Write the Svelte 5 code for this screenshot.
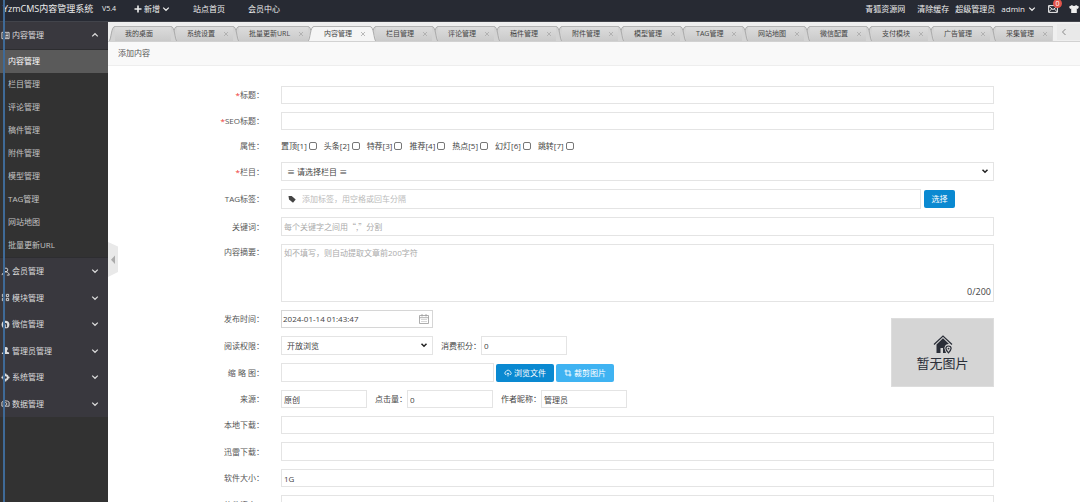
<script>
	let openGroup = $state(0);
	let activeItem = $state("内容管理");
	let activeTab = $state("内容管理");
	let collapsed = $state(false);
	let summary = $state("");

	let tabs = $state([
		"我的桌面", "系统设置", "批量更新URL", "内容管理", "栏目管理", "评论管理", "稿件管理", "附件管理",
		"模型管理", "TAG管理", "网站地图", "微信配置", "支付模块", "广告管理", "采集管理"
	]);

	const contentItems = [
		"内容管理", "栏目管理", "评论管理", "稿件管理", "附件管理", "模型管理", "TAG管理", "网站地图", "批量更新URL"
	];

	const groups = [
		{ name: "会员管理", icon: "user" },
		{ name: "模块管理", icon: "blocks" },
		{ name: "微信管理", icon: "wechat" },
		{ name: "管理员管理", icon: "admin" },
		{ name: "系统管理", icon: "gear" },
		{ name: "数据管理", icon: "data" }
	];

	const flags = ["置顶", "头条", "特荐", "推荐", "热点", "幻灯", "跳转"];

	function closeTab(name) {
		tabs = tabs.filter((t) => t !== name);
	}
</script>

{#snippet chevron(up)}
	<svg class="chevron" class:up viewBox="0 0 8 8" aria-hidden="true">
		<path d="M1.2 2.6 L4 5.3 L6.8 2.6" fill="none" stroke="currentColor" stroke-width="1.2" />
	</svg>
{/snippet}

{#snippet groupIcon(name)}
	<svg class="group-icon" viewBox="0 0 10 10" aria-hidden="true">
		{#if name === "news"}
			<path d="M1 1.5h8v7H1z M5 3.3h3 M5 5h3 M2.3 6.8h5.7" fill="none" stroke="currentColor" />
			<path d="M2.2 2.8h2v2.5h-2z" fill="currentColor" />
		{:else if name === "user"}
			<circle cx="5.5" cy="3.2" r="2" fill="none" stroke="currentColor" />
			<path d="M1.2 9c.3-2.5 2-3.4 4.3-3.6C7.7 5.7 9 7 9.2 9H6.5" fill="none" stroke="currentColor" />
		{:else if name === "blocks"}
			<path d="M1.5 1.5h2.5v2.5h-2.5z M6 1.5h2.5v2.5H6z M1.5 6h2.5v2.5h-2.5z M6 6h2.5v2.5H6z" fill="none" stroke="currentColor" />
		{:else if name === "wechat"}
			<circle cx="5" cy="5" r="4.3" fill="currentColor" />
			<path d="M3 3.5l3 1v3.5" fill="none" stroke="#39383e" stroke-width="1.5" />
		{:else if name === "admin"}
			<path d="M5.5 1a2.2 2.2 0 0 1 1.2 4v1.3L9 7.3V9H1V7.5l3.2-1.2V5A2.2 2.2 0 0 1 5.5 1z" fill="currentColor" />
		{:else if name === "gear"}
			<circle cx="5" cy="5" r="2.5" fill="none" stroke="currentColor" stroke-width="2" />
			<path d="M5 .5v2 M5 7.5v2 M.5 5h2 M7.5 5h2" stroke="currentColor" stroke-width="1.6" />
		{:else}
			<path d="M1 3.5C3 1.5 7 1.5 9 3.5V8H1z" fill="none" stroke="currentColor" />
			<circle cx="5" cy="5.5" r="1.5" fill="none" stroke="currentColor" />
		{/if}
	</svg>
{/snippet}

<div class="app">
	<header class="topbar">
		<a class="logo" href="#home">YzmCMS内容管理系统</a>
		<span class="version">V5.4</span>
		<button class="add" type="button">
			<svg viewBox="0 0 8 8" aria-hidden="true"><path d="M4 .5v7 M.5 4h7" stroke="currentColor" stroke-width="1.6" /></svg>
			新增
			{@render chevron(false)}
		</button>
		<nav class="top-links">
			<a href="#site">站点首页</a>
			<a href="#member">会员中心</a>
		</nav>
		<nav class="user-links">
			<a href="#res">青狐资源网</a>
			<a class="cache" href="#cache">清除缓存</a>
			<span>超级管理员</span>
			<button class="account" type="button">admin {@render chevron(false)}</button>
			<button class="mail" type="button" aria-label="消息">
				<svg viewBox="0 0 10 8" aria-hidden="true">
					<path d="M.6.6h8.8v6.8H.6z M.6 1.2L5 4.6l4.4-3.4 M.6 7l3-3 M9.4 7l-3-3" fill="none" stroke="currentColor" />
				</svg>
				<span class="badge">0</span>
			</button>
			<button class="skin" type="button" aria-label="皮肤">
				<svg viewBox="0 0 10 8" aria-hidden="true">
					<path d="M3 0c.8 1.3 3.2 1.3 4 0l3 1.7-1.2 2.3-1-.5V8H2.2V3.5l-1 .5L0 1.7z" fill="currentColor" />
				</svg>
			</button>
		</nav>
	</header>

	<div class="body">
		{#if !collapsed}
			<aside class="sidebar">
				<button class="group first" type="button" onclick={() => (openGroup = openGroup === 0 ? -1 : 0)}>
					{@render groupIcon("news")}
					<span>内容管理</span>
					{@render chevron(openGroup === 0)}
				</button>
				{#if openGroup === 0}
					<ul class="items">
						{#each contentItems as item}
							<li>
								<a href="#{item}" class:active={item === activeItem} onclick={() => (activeItem = item)}>{item}</a>
							</li>
						{/each}
					</ul>
				{/if}
				<div class="groups">
					{#each groups as group, i}
						<button class="group" type="button" onclick={() => (openGroup = i + 1)}>
							{@render groupIcon(group.icon)}
							<span>{group.name}</span>
							{@render chevron(false)}
						</button>
					{/each}
				</div>
			</aside>
		{/if}

		<main class="main">
			<button class="handle" type="button" aria-label="收起菜单" onclick={() => (collapsed = !collapsed)}>
				<svg viewBox="0 0 10 35" aria-hidden="true">
					<path d="M0 0L10 4.5V30L0 35z" fill="#e9e9e9" />
					<path d="M7 13.5V22L3 17.7z" fill="#ababab" />
				</svg>
			</button>

			<div class="tabbar">
				<ul class="tabs">
					{#each tabs as tab, i (tab)}
						<li
							class="tab"
							class:active={tab === activeTab}
							style:z-index={tab === activeTab ? tabs.length + 1 : tabs.length - i}
						>
							<svg class="edge" viewBox="0 0 6 16" aria-hidden="true">
								<path class="fill" d="M0 16C2 12 2 1 6 .5V16z" />
								<path class="line" d="M0 15.5C2.5 13 2 .5 6 .5" />
							</svg>
							<div class="tab-mid">
								<button class="tab-name" type="button" onclick={() => (activeTab = tab)}>{tab}</button>
								{#if i > 0}
									<button class="tab-close" type="button" aria-label="关闭{tab}" onclick={() => closeTab(tab)}>
										<svg viewBox="0 0 6 6" aria-hidden="true"><path d="M1 1l4 4M5 1L1 5" stroke="currentColor" stroke-width=".8" /></svg>
									</button>
								{/if}
							</div>
							<svg class="edge" viewBox="0 0 6 16" aria-hidden="true">
								<path class="fill" d="M6 16C4 12 4 1 0 .5V16z" />
								<path class="line" d="M6 15.5C3.5 13 4 .5 0 .5" />
							</svg>
						</li>
					{/each}
				</ul>
				<button class="tab-scroll" type="button" aria-label="向左">
					<svg viewBox="0 0 8 8" aria-hidden="true"><path d="M5.5 1L2.5 4l3 3" fill="none" stroke="currentColor" /></svg>
				</button>
			</div>

			<h1 class="crumb">添加内容</h1>

			<form class="form">
				<div class="row">
					<label class="name" for="title"><i>*</i>标题：</label>
					<input class="field grow" id="title" type="text" />
				</div>
				<div class="row">
					<label class="name" for="seo"><i>*</i>SEO标题：</label>
					<input class="field grow" id="seo" type="text" />
				</div>
				<div class="row flags-row">
					<span class="name">属性：</span>
					<div class="flags">
						{#each flags as flag, i}
							<label>{flag}[{i + 1}]<input type="checkbox" /></label>
						{/each}
					</div>
				</div>
				<div class="row">
					<label class="name" for="cat"><i>*</i>栏目：</label>
					<div class="select grow">
						<select class="field tall" id="cat">
							<option>≡ 请选择栏目 ≡</option>
						</select>
						<svg viewBox="0 0 8 8" aria-hidden="true"><path d="M1.5 2.7L4 5.2l2.5-2.5" fill="none" stroke="currentColor" stroke-width="1.5" /></svg>
					</div>
				</div>
				<div class="row tag-row">
					<label class="name" for="tag">TAG标签：</label>
					<div class="tag-box grow">
						<svg viewBox="0 0 8 8" aria-hidden="true"><path d="M.5 1h3.2l4 3.5L5 7.7 1 4.5z" fill="currentColor" /></svg>
						<input id="tag" type="text" placeholder="添加标签，用空格或回车分隔" />
					</div>
					<button class="btn pick" type="button">选择</button>
				</div>
				<div class="row">
					<label class="name" for="keys">关键词：</label>
					<input class="field tall grow keys" id="keys" type="text" placeholder="每个关键字之间用“,”分割" />
				</div>
				<div class="row top">
					<label class="name" for="summary">内容摘要：</label>
					<div class="summary grow">
						<textarea id="summary" maxlength="200" placeholder="如不填写，则自动提取文章前200字符" bind:value={summary}></textarea>
						<span class="count">{summary.length}/200</span>
					</div>
				</div>

				<div class="with-picture">
					<div class="rows">
						<div class="row">
							<label class="name" for="date">发布时间：</label>
							<div class="date">
								<input id="date" type="text" value="2024-01-14 01:43:47" />
								<svg viewBox="0 0 10 10" aria-hidden="true">
									<path d="M.5 1.5h9v8h-9z M.5 3.7h9 M3 0v2.5 M7 0v2.5 M2.5 5.5h1 M4.5 5.5h1 M6.5 5.5h1 M2.5 7.5h1 M4.5 7.5h1 M6.5 7.5h1" fill="none" stroke="currentColor" stroke-width=".8" />
								</svg>
							</div>
						</div>
						<div class="row">
							<label class="name" for="perm">阅读权限：</label>
							<div class="select medium">
								<select class="field tall" id="perm">
									<option>开放浏览</option>
								</select>
								<svg viewBox="0 0 8 8" aria-hidden="true"><path d="M1.5 2.7L4 5.2l2.5-2.5" fill="none" stroke="currentColor" stroke-width="1.5" /></svg>
							</div>
							<label class="inline" for="points">消费积分：</label>
							<input class="field tall short" id="points" type="text" value="0" />
						</div>
						<div class="row">
							<label class="name" for="thumb">缩 略 图：</label>
							<input class="field tall thumb" id="thumb" type="text" />
							<button class="btn browse" type="button">
								<svg viewBox="0 0 8 8" aria-hidden="true">
									<path d="M2.5 5.7H2A1.6 1.6 0 0 1 2 2.6 2.2 2.2 0 0 1 6.2 2.8 1.5 1.5 0 0 1 6 5.7H5.5 M4 7.5V4 M2.9 5L4 3.9 5.1 5" fill="none" stroke="currentColor" stroke-width=".8" />
								</svg>
								浏览文件
							</button>
							<button class="btn light" type="button">
								<svg viewBox="0 0 8 8" aria-hidden="true">
									<path d="M2 .5V6h5.5 M.5 2H6v5.5" fill="none" stroke="currentColor" stroke-width=".9" />
								</svg>
								裁剪图片
							</button>
						</div>
						<div class="row">
							<label class="name" for="from">来源：</label>
							<input class="field short" id="from" type="text" value="原创" />
							<label class="inline" for="hits">点击量：</label>
							<input class="field short" id="hits" type="text" value="0" />
							<label class="inline" for="author">作者昵称：</label>
							<input class="field short" id="author" type="text" value="管理员" />
						</div>
					</div>
					<div class="picture">
						<svg viewBox="0 0 20 20" aria-hidden="true">
							<path d="M1 10.5L10 2l9 8.5" fill="none" stroke="currentColor" stroke-width="1.2" />
							<path d="M3.5 10.5L10 4.3l6 5.7a4 4 0 0 0-4 6L13 19h-3v-5H7.5v5h-4z" fill="currentColor" />
							<path d="M15.5 18.8c-1.8-1.8-2.6-3-2.6-4.2a2.6 2.6 0 0 1 5.2 0c0 1.2-.8 2.4-2.6 4.2z" fill="none" stroke="currentColor" stroke-width="1.2" />
							<circle cx="15.5" cy="14.6" r=".9" fill="currentColor" />
						</svg>
						<span>暂无图片</span>
					</div>
				</div>

				<div class="row">
					<label class="name" for="local">本地下载：</label>
					<input class="field grow" id="local" type="text" />
				</div>
				<div class="row">
					<label class="name" for="xunlei">迅雷下载：</label>
					<input class="field tall grow" id="xunlei" type="text" />
				</div>
				<div class="row">
					<label class="name" for="size">软件大小：</label>
					<input class="field grow" id="size" type="text" value="1G" />
				</div>
				<div class="row">
					<label class="name" for="lang">软件语言：</label>
					<input class="field tall grow" id="lang" type="text" />
				</div>
			</form>
		</main>
	</div>
	<div class="guide"></div>
</div>

<style>
	:global(body) { margin: 0; }

	.app {
		position: relative;
		display: flex;
		flex-direction: column;
		height: 100vh;
		overflow: hidden;
		background: #fff;
		color: #444;
		font-family: "Open Sans", "Noto Sans CJK SC", sans-serif;
		font-size: 8px;
		line-height: 12px;
	}

	* { box-sizing: border-box; }
	svg { display: block; flex: none; }
	ul { list-style: none; margin: 0; padding: 0; }
	a { color: inherit; text-decoration: none; }
	button, input, select, textarea { font: inherit; color: inherit; margin: 0; }
	button { border: 0; padding: 0; background: none; cursor: pointer; }

	.chevron { width: 8px; height: 8px; }
	.chevron.up { transform: rotate(180deg); }

	/* Topbar */
	.topbar {
		display: flex;
		align-items: center;
		flex: none;
		height: 22px;
		padding-bottom: 3px;
		background: #272a33;
		border-bottom: 1px solid #42444b;
		color: #eee;
		white-space: nowrap;
	}
	.logo { width: 98px; padding-left: 3px; font-size: 9px; }
	.version { width: 36px; padding-left: 4px; font-size: 7px; }
	.add { display: flex; align-items: center; gap: 2px; }
	.add > svg:first-child { width: 8px; height: 8px; }
	.top-links { display: flex; gap: 23px; margin-left: 23px; }
	.user-links { display: flex; align-items: center; margin-left: auto; }
	.cache { margin: 0 6px 0 12px; }
	.account { display: flex; align-items: center; gap: 3px; margin-left: 6px; }
	.mail { position: relative; margin-left: 12px; }
	.mail svg, .skin svg { width: 10px; height: 8px; }
	.skin { margin: 0 1px 0 11px; }
	.badge {
		position: absolute;
		top: -6px;
		right: -4px;
		width: 9px;
		height: 9px;
		border-radius: 50%;
		background: #e2544b;
		color: #fff;
		font-size: 7px;
		line-height: 9px;
		text-align: center;
	}

	/* Sidebar */
	.body { display: flex; flex: 1; min-height: 0; }
	.sidebar { flex: none; width: 108px; background: #323232; color: #ddd; }
	.group {
		display: flex;
		align-items: center;
		flex: 1;
		width: 100%;
		padding: 0 9px 0 1px;
		background: #39383e;
		text-align: left;
	}
	.group span { flex: 1; margin-left: 2px; }
	.group.first { height: 28px; padding-bottom: 1px; border-bottom: 1px solid #2d2d30; }
	.group-icon { width: 9px; height: 9px; }
	.items a { display: block; height: 23px; padding-left: 8px; line-height: 22px; color: #c4c4c4; }
	.items a.active { background: #5a5a5a; color: #fff; }
	.groups { display: flex; flex-direction: column; height: 160px; border-top: 1px solid #2d2d30; }

	.guide { position: absolute; top: 0; bottom: 0; left: 3px; width: 2px; background: #3f6a97; pointer-events: none; }

	/* Tabs */
	.main { position: relative; flex: 1; min-width: 0; }
	.handle { position: absolute; top: 220px; left: 0; width: 10px; height: 35px; }
	.handle svg { width: 10px; height: 35px; }
	.tabbar {
		display: flex;
		height: 20px;
		background: #efefef;
		border-bottom: 1px solid #d2d2d2;
	}
	.tabs { display: flex; flex: 1; min-width: 0; overflow: hidden; padding: 4px 0 0 1px; }
	.tab { position: relative; display: flex; flex: none; margin-right: -6px; color: #444; }
	.edge { width: 6px; height: 16px; }
	.edge .fill { fill: #d3d3d3; }
	.edge .line { fill: none; stroke: #ababab; }
	.tab-mid {
		display: flex;
		align-items: center;
		min-width: 56px;
		height: 16px;
		padding-left: 10px;
		border-top: 1px solid #b4b4b4;
		border-bottom: 1px solid #b4b4b4;
		background: linear-gradient(#dcdcdc, #cacaca);
	}
	.tab-name { font-size: 7px; white-space: nowrap; }
	.tab-close { margin: 0 4px 0 8px; color: #aaa; }
	.tab-close svg { width: 6px; height: 6px; }
	.tab.active .fill { fill: #f5f5f5; }
	.tab.active .tab-mid { background: #f5f5f5; border-bottom-color: #f5f5f5; }
	.tab-scroll {
		width: 23px;
		margin: 2px 0 1px 4px;
		padding-left: 3px;
		background: #e9e9e9;
		color: #888;
	}
	.tab-scroll svg { width: 8px; height: 8px; }

	.crumb {
		height: 24px;
		margin: 0;
		padding-left: 10px;
		background: #f9f9f9;
		border-bottom: 1px solid #eee;
		font-size: 8px;
		font-weight: 400;
		line-height: 22px;
		color: #555;
	}

	/* Form */
	.form { display: flex; flex-direction: column; gap: 8px; padding: 20px 86px 0 0; }
	.row { display: flex; align-items: center; }
	.row.top { align-items: flex-start; }
	.row.top .name { padding-top: 2px; }
	.name { flex: none; width: 156px; margin-right: 17px; text-align: right; color: #555; }
	.name i { font-style: normal; color: #e33; }
	.grow { flex: 1; min-width: 0; }
	.field {
		height: 18px;
		padding: 0 2px;
		border: 1px solid #e4e4e4;
		border-radius: 0;
		background: #fff;
		outline: none;
	}
	.field.tall { height: 19px; }
	.short { width: 86px; }
	.thumb { width: 213px; }
	.medium { width: 152px; }
	.inline { padding-left: 8px; }
	.keys { font-family: "Noto Sans CJK SC", sans-serif; }
	::placeholder { color: #aaa; opacity: 1; }

	.flags-row { height: 16px; }
	.flags { display: flex; gap: 7px; }
	.flags label { display: flex; align-items: center; gap: 2px; }
	.flags input {
		width: 8px;
		height: 8px;
		appearance: none;
		border: 1px solid #777;
		border-radius: 2px;
		background: #fff;
	}
	.flags input:checked { background: #0a89d1; }

	.select { position: relative; }
	.select select { display: block; width: 100%; padding-left: 5px; appearance: none; }
	.select svg { position: absolute; top: 5px; right: 5px; width: 8px; height: 8px; color: #222; pointer-events: none; }

	.tag-row { padding-right: 39px; }
	.tag-box { display: flex; align-items: center; height: 20px; padding-left: 6px; border: 1px solid #e4e4e4; }
	.tag-box svg { width: 8px; height: 8px; }
	.tag-box input { flex: 1; padding: 0 0 0 6px; border: 0; outline: none; }
	.tag-box input::placeholder { color: #bbb; }

	.btn {
		display: flex;
		align-items: center;
		justify-content: center;
		gap: 2px;
		flex: none;
		width: 58px;
		height: 18px;
		border-radius: 2px;
		background: #0a89d1;
		color: #fff;
	}
	.btn svg { width: 8px; height: 8px; }
	.btn.pick { width: 31px; margin-left: 3px; }
	.btn.browse { margin: 0 2px; }
	.btn.light { background: #3fb3f2; }

	.summary { position: relative; height: 58px; }
	.summary textarea {
		display: block;
		width: 100%;
		height: 100%;
		padding: 2px;
		border: 1px solid #e4e4e4;
		outline: none;
		resize: none;
	}
	.count { position: absolute; right: 3px; bottom: 4px; font-size: 9px; }

	.date { display: flex; align-items: center; width: 152px; height: 18px; padding-right: 3px; border: 1px solid #d6d6d6; }
	.date input { flex: 1; min-width: 0; padding: 0 0 0 1px; border: 0; outline: none; }
	.date svg { width: 10px; height: 10px; color: #999; }

	.with-picture { display: flex; justify-content: space-between; }
	.rows { display: flex; flex-direction: column; gap: 8px; }
	.picture {
		display: flex;
		flex-direction: column;
		align-items: center;
		justify-content: center;
		width: 103px;
		height: 69px;
		margin-top: 8px;
		border: 1px solid #ddd;
		background: #d5d5d5;
		color: #2a2e38;
		font-size: 13px;
		line-height: 18px;
	}
	.picture svg { width: 20px; height: 20px; }
</style>
